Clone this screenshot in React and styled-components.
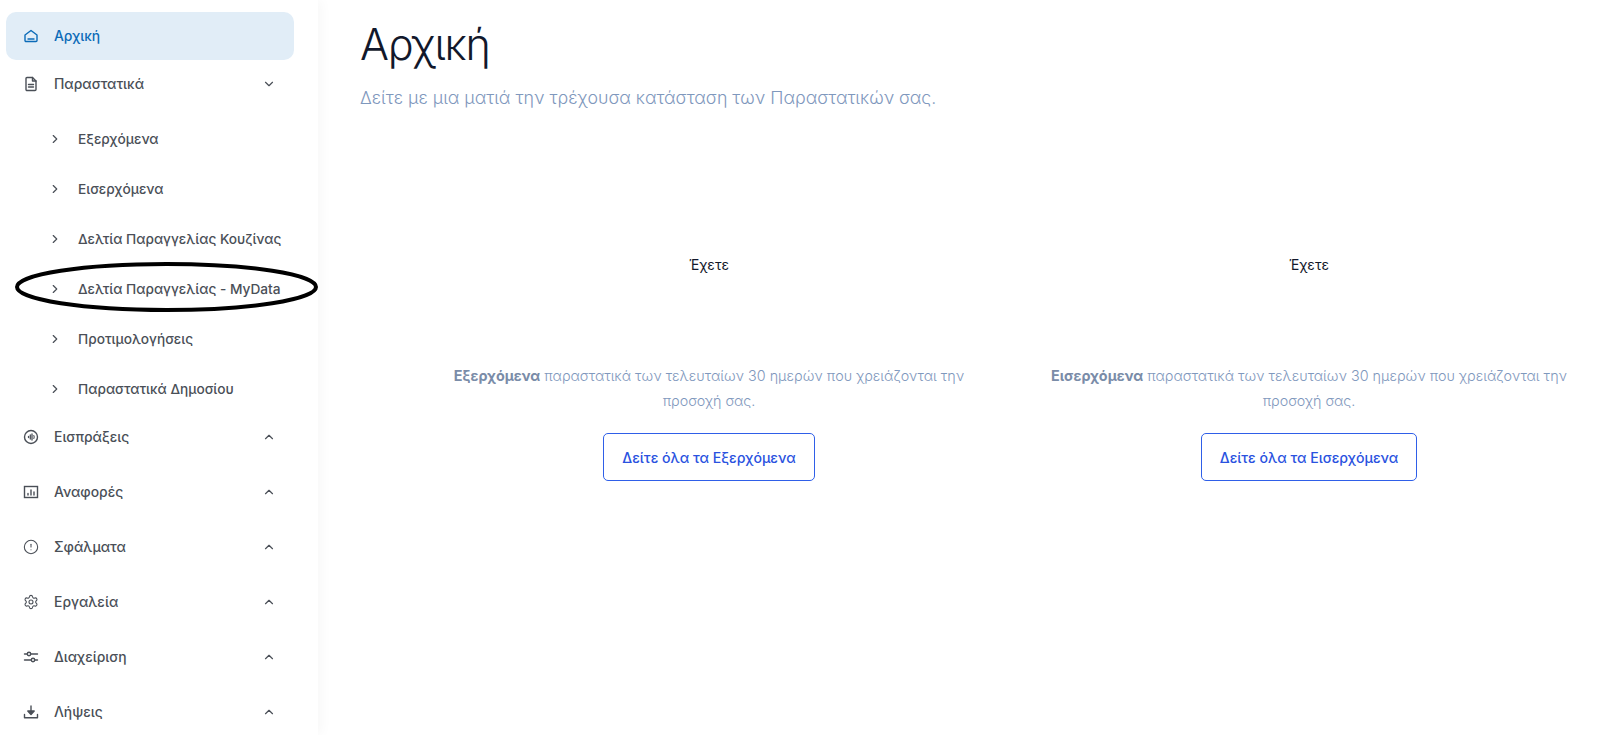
import React from "react";
import styled, { createGlobalStyle } from "styled-components";
import { ChevronDown, ChevronRight, ChevronUp, CircleAlert, Settings } from "lucide-react";

const GlobalStyle = createGlobalStyle`
  html, body {
    margin: 0;
    padding: 0;
    height: 100%;
    overflow: hidden;
    background: #fff;
  }
  #root {
    height: 100%;
  }
`;

const Page = styled.div`
  display: flex;
  height: 735px;
  overflow: hidden;
  font-family: Inter, "Noto Sans", sans-serif;
`;

const Sidebar = styled.nav`
  position: relative;
  flex: 0 0 318px;
  height: 735px;
  box-sizing: border-box;
  padding: 12px 24px 0 6px;
  box-shadow: 3px 0 12px rgba(0, 0, 0, 0.035);
  color: #4a4f57;
`;

const Row = styled.div`
  display: flex;
  align-items: center;
  height: ${(p) => p.$height}px;
  box-sizing: border-box;
  padding: 0 18px 0 17px;
  border-radius: 10px;
  font-size: 13.9px;
  font-weight: 500;
  color: ${(p) => (p.$active ? "#0b6bb8" : "#4a4f57")};
  background: ${(p) => (p.$active ? "#e1edf7" : "transparent")};
`;

const RowIcon = styled.span`
  display: flex;
  width: 31px;
  flex: none;
`;

const RowLabel = styled.span`
  flex: 1;
`;

const SubList = styled.div`
  padding: 6px 0 0;
  margin-bottom: -4px;
`;

const SubRow = styled.div`
  display: flex;
  align-items: center;
  height: 50px;
  padding-left: 42px;
  font-size: 13.7px;
  font-weight: 500;
  white-space: nowrap;
  color: #4a4f57;
`;

const SubArrow = styled.span`
  display: flex;
  width: 30px;
  flex: none;
`;

const Highlight = styled.svg`
  position: absolute;
  left: 14px;
  top: 261px;
  pointer-events: none;
`;

const Main = styled.main`
  flex: 1;
  min-width: 0;
  padding-left: 42px;
`;

const Title = styled.h1`
  margin: 14px 0 0;
  font-size: 43px;
  line-height: 60px;
  letter-spacing: -1.2px;
  font-weight: 300;
  color: #12182b;
`;

const Subtitle = styled.p`
  margin: 9px 0 0;
  font-size: 17.8px;
  line-height: 30px;
  font-weight: 300;
  color: #7f98bd;
`;

const Columns = styled.div`
  display: grid;
  grid-template-columns: 600px 600px;
  margin: 142px 0 0 49px;
`;

const Summary = styled.section`
  display: flex;
  flex-direction: column;
  align-items: center;
  text-align: center;
`;

const Count = styled.div`
  font-size: 14px;
  line-height: 20px;
  font-weight: 400;
  color: #12182b;
`;

const Description = styled.p`
  margin: 88px 0 0;
  width: 530px;
  font-size: 14.35px;
  line-height: 25px;
  font-weight: 300;
  color: #7f98bd;

  strong {
    font-weight: 700;
    color: #7a8ca8;
  }
`;

const ActionButton = styled.button`
  margin-top: 20px;
  height: 48px;
  padding: 0 18px;
  border: 1px solid #2f5fe8;
  border-radius: 5px;
  background: #fff;
  font-family: inherit;
  font-size: 14.1px;
  font-weight: 500;
  color: #2a52e0;
`;

const Svg = ({ children }) => (
  <svg
    width="16"
    height="16"
    viewBox="0 0 16 16"
    fill="none"
    stroke="currentColor"
    strokeWidth="1.4"
    strokeLinecap="round"
    strokeLinejoin="round"
  >
    {children}
  </svg>
);

const HomeIcon = () => (
  <Svg>
    <path d="M2 7 8 2.500 14 7v5.500a1 1 0 0 1-1 1H3a1 1 0 0 1-1-1z" />
    <path d="M5 11h6" />
  </Svg>
);

const DocumentIcon = () => (
  <Svg>
    <path d="M3 2.500a1 1 0 0 1 1-1h5.500L13 5v8.500a1 1 0 0 1-1 1H4a1 1 0 0 1-1-1z" />
    <path d="M9.500 1.500V5H13M5.500 8.500h5M5.500 11h5" />
  </Svg>
);

const CashIcon = () => (
  <Svg>
    <circle cx="8" cy="8" r="6.500" />
    <path d="M5.500 7.500v1M7.300 6v4M9 5v6" strokeWidth="1.300" />
    <path d="M10.800 6.500a3 3 0 0 1 0 3" strokeWidth="1.100" />
  </Svg>
);

const ChartIcon = () => (
  <Svg>
    <rect x="1.500" y="2.500" width="13" height="11" strokeLinejoin="miter" />
    <path d="M5 11V9.500M8 11V6M11 11V8" />
  </Svg>
);

const SlidersIcon = () => (
  <Svg>
    <path d="M1.500 5H4M8 5h6.500M1.500 11H8M12 11h2.500" />
    <circle cx="6" cy="5" r="1.700" />
    <circle cx="10" cy="11" r="1.700" />
  </Svg>
);

const DownloadIcon = () => (
  <Svg>
    <path d="M1.500 10.500v3.200h13v-3.200" />
    <path d="M8 2v5" />
    <path d="M4.800 7h6.400L8 10.500z" fill="currentColor" />
  </Svg>
);

const groups = [
  { label: "Εισπράξεις", icon: <CashIcon /> },
  { label: "Αναφορές", icon: <ChartIcon /> },
  { label: "Σφάλματα", icon: <CircleAlert size={16} strokeWidth={1.6} /> },
  { label: "Εργαλεία", icon: <Settings size={16} strokeWidth={1.6} /> },
  { label: "Διαχείριση", icon: <SlidersIcon /> },
  { label: "Λήψεις", icon: <DownloadIcon /> },
];

const documents = [
  "Εξερχόμενα",
  "Εισερχόμενα",
  "Δελτία Παραγγελίας Κουζίνας",
  "Δελτία Παραγγελίας - MyData",
  "Προτιμολογήσεις",
  "Παραστατικά Δημοσίου",
];

const summaries = [
  { name: "Εξερχόμενα" },
  { name: "Εισερχόμενα" },
];

export default function App() {
  return (
    <Page>
      <GlobalStyle />
      <Sidebar>
        <Row $active $height={48}>
          <RowIcon><HomeIcon /></RowIcon>
          <RowLabel>Αρχική</RowLabel>
        </Row>
        <Row $height={48}>
          <RowIcon><DocumentIcon /></RowIcon>
          <RowLabel>Παραστατικά</RowLabel>
          <ChevronDown size={14} />
        </Row>
        <SubList>
          {documents.map((item) => (
            <SubRow key={item}>
              <SubArrow><ChevronRight size={14} /></SubArrow>
              {item}
            </SubRow>
          ))}
        </SubList>
        {groups.map((g) => (
          <Row key={g.label} $height={54.9}>
            <RowIcon>{g.icon}</RowIcon>
            <RowLabel>{g.label}</RowLabel>
            <ChevronUp size={14} />
          </Row>
        ))}
        <Highlight width="306" height="52" viewBox="0 0 306 52">
          <ellipse cx="152.500" cy="26" rx="149.500" ry="23" fill="none" stroke="#000" strokeWidth="4" />
        </Highlight>
      </Sidebar>
      <Main>
        <Title>Αρχική</Title>
        <Subtitle>Δείτε με μια ματιά την τρέχουσα κατάσταση των Παραστατικών σας.</Subtitle>
        <Columns>
          {summaries.map((s) => (
            <Summary key={s.name}>
              <Count>Έχετε</Count>
              <Description>
                <strong>{s.name}</strong> παραστατικά των τελευταίων 30 ημερών που χρειάζονται την προσοχή σας.
              </Description>
              <ActionButton>Δείτε όλα τα {s.name}</ActionButton>
            </Summary>
          ))}
        </Columns>
      </Main>
    </Page>
  );
}
